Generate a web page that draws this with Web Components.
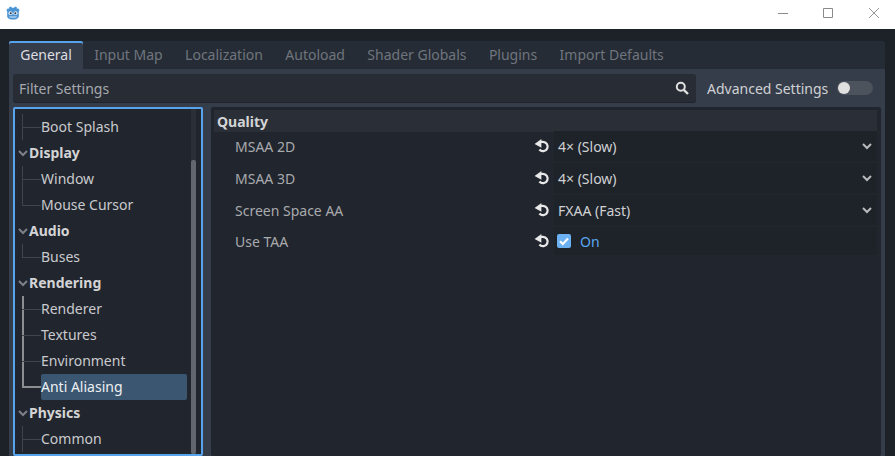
<!DOCTYPE html>
<html>
<head>
<meta charset="utf-8">
<style>
  html, body { margin: 0; height: 100%; overflow: hidden; background: #1d2229; }
  body { font-family: "Noto Sans", sans-serif; font-size: 14px; }
</style>
</head>
<body>
<app-window></app-window>
<script>
const ARROW = `<svg width="12" height="12" viewBox="0 0 12 12"><path d="M2 4l4 4 4-4" fill="none" stroke="currentColor" stroke-width="2"/></svg>`;
const RESET = `<svg width="16" height="16" viewBox="0 0 16 16"><path d="M6.5 3.8H9A4.7 4.7 0 1 1 5.4 11.6" fill="none" stroke="#e8e8e8" stroke-width="2.3"/><path d="M7.4 1L.6 6l6.8 3.8z" fill="#e8e8e8"/></svg>`;

class TitleBar extends HTMLElement {
    connectedCallback() {
        const shadow = this.attachShadow({ mode: "open" });
        shadow.innerHTML = `<style>
            :host { display: flex; height: 29px; background: #fff; align-items: center; justify-content: space-between; }
            .logo { margin: 0 0 3px 6px; display: block; }
            .buttons { display: flex; gap: 35px; margin: 0 16px 3px 0; }
            .buttons svg { display: block; }
            .buttons svg:last-child { margin-left: 1px; }
        </style>
        <svg class="logo" width="14" height="14" viewBox="0 0 14 14">
            <path d="M4.6.6L6 1.8h2L9.4.6l1.6.9-.2 1.5 1.2-.7L13.6 4l-.8 1.4V11l-1.6 1.8L9 13.4H5l-2.2-.6L1.2 11V5.4L.4 4l1.6-1.7 1.2.7L3 1.5z" fill="#4a94d4"/>
            <circle cx="4.4" cy="7.2" r="1.9" fill="#dcebf7"/><circle cx="9.6" cy="7.2" r="1.9" fill="#dcebf7"/>
            <circle cx="4.7" cy="7.3" r="1" fill="#2f3a46"/><circle cx="9.3" cy="7.3" r="1" fill="#2f3a46"/>
            <path d="M6.5 6.6h1v2h-1zM3.4 10.6h7.2v1H3.4z" fill="#dcebf7"/>
        </svg>
        <div class="buttons">
            <svg width="10" height="10" viewBox="0 0 10 10"><path d="M0 5.5h10" stroke="#8a8a8a"/></svg>
            <svg width="10" height="10" viewBox="0 0 10 10"><path d="M.5.5h9v9h-9z" fill="none" stroke="#8a8a8a"/></svg>
            <svg width="10" height="10" viewBox="0 0 10 10"><path d="M0 0l10 10M10 0L0 10" stroke="#8a8a8a" stroke-width=".9"/></svg>
        </div>`;
    }
}
customElements.define("title-bar", TitleBar);

class TabBar extends HTMLElement {
    connectedCallback() {
        const shadow = this.attachShadow({ mode: "open" });
        const tabs = this.getAttribute("tabs").split(",");
        shadow.innerHTML = `<style>
            :host { display: flex; height: 28px; background: #262c35; border-radius: 3px 3px 0 0; }
            .tab { padding: 0 11.2px; line-height: 28px; color: #6f757e; }
            .on { background: #363d4a; color: #dcdee1; box-shadow: inset 0 2px 0 #57a4ec; border-radius: 2px 2px 0 0; }
        </style>` + tabs.map((t, i) => `<div class="tab ${i === 0 ? "on" : ""}">${t}</div>`).join("");
    }
}
customElements.define("tab-bar", TabBar);

class SearchRow extends HTMLElement {
    connectedCallback() {
        const shadow = this.attachShadow({ mode: "open" });
        shadow.innerHTML = `<style>
            :host { display: flex; align-items: center; height: 28px; }
            .field { flex: none; width: 683px; height: 28px; background: #272c35; border-radius: 3px; display: flex; align-items: center; justify-content: space-between; padding: 0 6px; box-sizing: border-box; color: #a6a9ae; box-shadow: 0 1px 0 #1f242b; }
            .field svg { display: block; }
            .adv { margin-left: 11px; color: #cfd1d4; }
            .toggle { margin-left: 9px; width: 36px; height: 14px; background: #4d535d; border-radius: 7px; position: relative; }
            .knob { position: absolute; left: 1px; top: 1px; width: 12px; height: 12px; border-radius: 50%; background: #e0e0e0; }
        </style>
        <div class="field"><span>Filter Settings</span>
            <svg width="16" height="16" viewBox="0 0 16 16"><circle cx="6.8" cy="6.8" r="4" fill="none" stroke="#e0e0e0" stroke-width="2"/><path d="M9.8 9.8l4.2 4.2" stroke="#e0e0e0" stroke-width="2.4"/></svg>
        </div>
        <span class="adv">Advanced Settings</span>
        <div class="toggle"><div class="knob"></div></div>`;
    }
}
customElements.define("search-row", SearchRow);

class TreeItem extends HTMLElement {
    connectedCallback() {
        const shadow = this.attachShadow({ mode: "open" });
        const group = this.hasAttribute("group");
        const sel = this.hasAttribute("selected");
        const path = this.hasAttribute("path");
        shadow.innerHTML = `<style>
            :host { display: block; height: 26px; position: relative; color: #c9cacd; line-height: 26px; }
            .group { padding-left: 2px; font-weight: 700; color: #d3d4d6; display: flex; align-items: center; }
            .group svg { color: #7d8086; }
            .leaf { margin-left: 26px; margin-right: 14px; }
            .sel { background: #3a5670; color: #eef0f2; border-radius: 2px; }
            .v { position: absolute; left: 7px; top: 0; bottom: 0; width: 1px; background: #40444b; }
            .h { position: absolute; left: 7px; top: 13px; width: 19px; height: 1px; background: #40444b; }
            .last .v { bottom: 13px; }
            .path .v, .path .h { background: #8c8e91; }
            .path .v { width: 2px; bottom: 12px; }
            .path .h { height: 2px; top: 12px; }
            .faint .v { background: #8c8e91; width: 2px; }
        </style>` + (group
            ? `<div class="group">${ARROW}<slot></slot></div>`
            : `<div class="${this.hasAttribute("last") ? "last" : ""} ${sel ? "path" : ""} ${path ? "faint" : ""}"><div class="v"></div><div class="h"></div></div><div class="leaf ${sel ? "sel" : ""}"><slot></slot></div>`);
    }
}
customElements.define("tree-item", TreeItem);

class SectionTree extends HTMLElement {
    connectedCallback() {
        const shadow = this.attachShadow({ mode: "open" });
        shadow.innerHTML = `<style>
            :host { display: block; flex: none; width: 190px; box-sizing: border-box; border: 2px solid #57a4ec; border-radius: 2px; background: #21252d; padding-top: 5px; position: relative; overflow: hidden; }
            .bar { position: absolute; right: 5px; top: 0; bottom: 0; width: 5px; background: #2b3038; }
            .grab { position: absolute; left: 0; right: 0; top: 51px; bottom: 0; background: #62666e; border-radius: 2px; }
        </style>
        <slot></slot>
        <div class="bar"><div class="grab"></div></div>`;
    }
}
customElements.define("section-tree", SectionTree);

class PropRow extends HTMLElement {
    connectedCallback() {
        const shadow = this.attachShadow({ mode: "open" });
        const value = this.getAttribute("value");
        const check = this.hasAttribute("check");
        shadow.innerHTML = `<style>
            :host { display: flex; align-items: center; height: ${check ? 30 : 32}px; color: #a8aaae; }
            .name { width: 299px; padding-left: 21px; }
            .reset { width: 20px; display: flex; }
            .reset svg { display: block; }
            .value { flex: 1; display: flex; align-items: center; justify-content: space-between; height: calc(100% - 2px); padding-left: 4px; color: #cfd1d4; background: #1e2229; }
            .value svg { color: #b9bbbe; margin-right: 4px; }
            .on { display: flex; align-items: center; gap: 9px; color: #5aa6ee; margin-left: -1px; }
            .box { width: 14px; height: 14px; border-radius: 2px; background: #6cb2f2; display: flex; }
            .box svg { margin: 0; }
        </style>
        <div class="name"><slot></slot></div>
        <div class="reset">${RESET}</div>` + (check
            ? `<div class="value"><div class="on"><div class="box"><svg width="14" height="14" viewBox="0 0 14 14"><path d="M3 7.2l2.8 2.8L11 4.5" fill="none" stroke="#fff" stroke-width="2"/></svg></div>${value}</div></div>`
            : `<div class="value"><span>${value}</span>${ARROW}</div>`);
    }
}
customElements.define("prop-row", PropRow);

class PropPanel extends HTMLElement {
    connectedCallback() {
        const shadow = this.attachShadow({ mode: "open" });
        shadow.innerHTML = `<style>
            :host { display: block; flex: 1; background: #21252d; padding: 3px 4px 0 3px; border-radius: 2px; }
            h3 { margin: 0; height: 22px; font-size: 14px; line-height: 24px; padding-left: 3px; background: #2a2e37; color: #d3d4d6; font-weight: 700; margin-bottom: -2px; }
        </style>
        <h3>${this.getAttribute("heading")}</h3>
        <slot></slot>`;
    }
}
customElements.define("prop-panel", PropPanel);

class AppWindow extends HTMLElement {
    connectedCallback() {
        const shadow = this.attachShadow({ mode: "open" });
        shadow.innerHTML = `<style>
            :host { display: flex; flex-direction: column; height: 456px; }
            .outer { flex: 1; display: flex; flex-direction: column; padding: 12px 10px 0 9px; min-height: 0; }
            .panel { flex: 1; min-height: 0; background: #363d4a; padding: 5px 4px 0 4px; display: flex; flex-direction: column; gap: 5px; }
            .split { flex: 1; min-height: 0; display: flex; gap: 8px; }
        </style>
        <title-bar></title-bar>
        <div class="outer">
            <tab-bar tabs="General,Input Map,Localization,Autoload,Shader Globals,Plugins,Import Defaults"></tab-bar>
            <div class="panel">
                <search-row></search-row>
                <div class="split">
                    <section-tree>
                        <tree-item>Boot Splash</tree-item>
                        <tree-item group>Display</tree-item>
                        <tree-item>Window</tree-item>
                        <tree-item last>Mouse Cursor</tree-item>
                        <tree-item group>Audio</tree-item>
                        <tree-item last>Buses</tree-item>
                        <tree-item group>Rendering</tree-item>
                        <tree-item path>Renderer</tree-item>
                        <tree-item path>Textures</tree-item>
                        <tree-item path>Environment</tree-item>
                        <tree-item last selected>Anti Aliasing</tree-item>
                        <tree-item group>Physics</tree-item>
                        <tree-item>Common</tree-item>
                    </section-tree>
                    <prop-panel heading="Quality">
                        <prop-row value="4× (Slow)">MSAA 2D</prop-row>
                        <prop-row value="4× (Slow)">MSAA 3D</prop-row>
                        <prop-row value="FXAA (Fast)">Screen Space AA</prop-row>
                        <prop-row value="On" check>Use TAA</prop-row>
                    </prop-panel>
                </div>
            </div>
        </div>`;
    }
}
customElements.define("app-window", AppWindow);
</script>
</body>
</html>
